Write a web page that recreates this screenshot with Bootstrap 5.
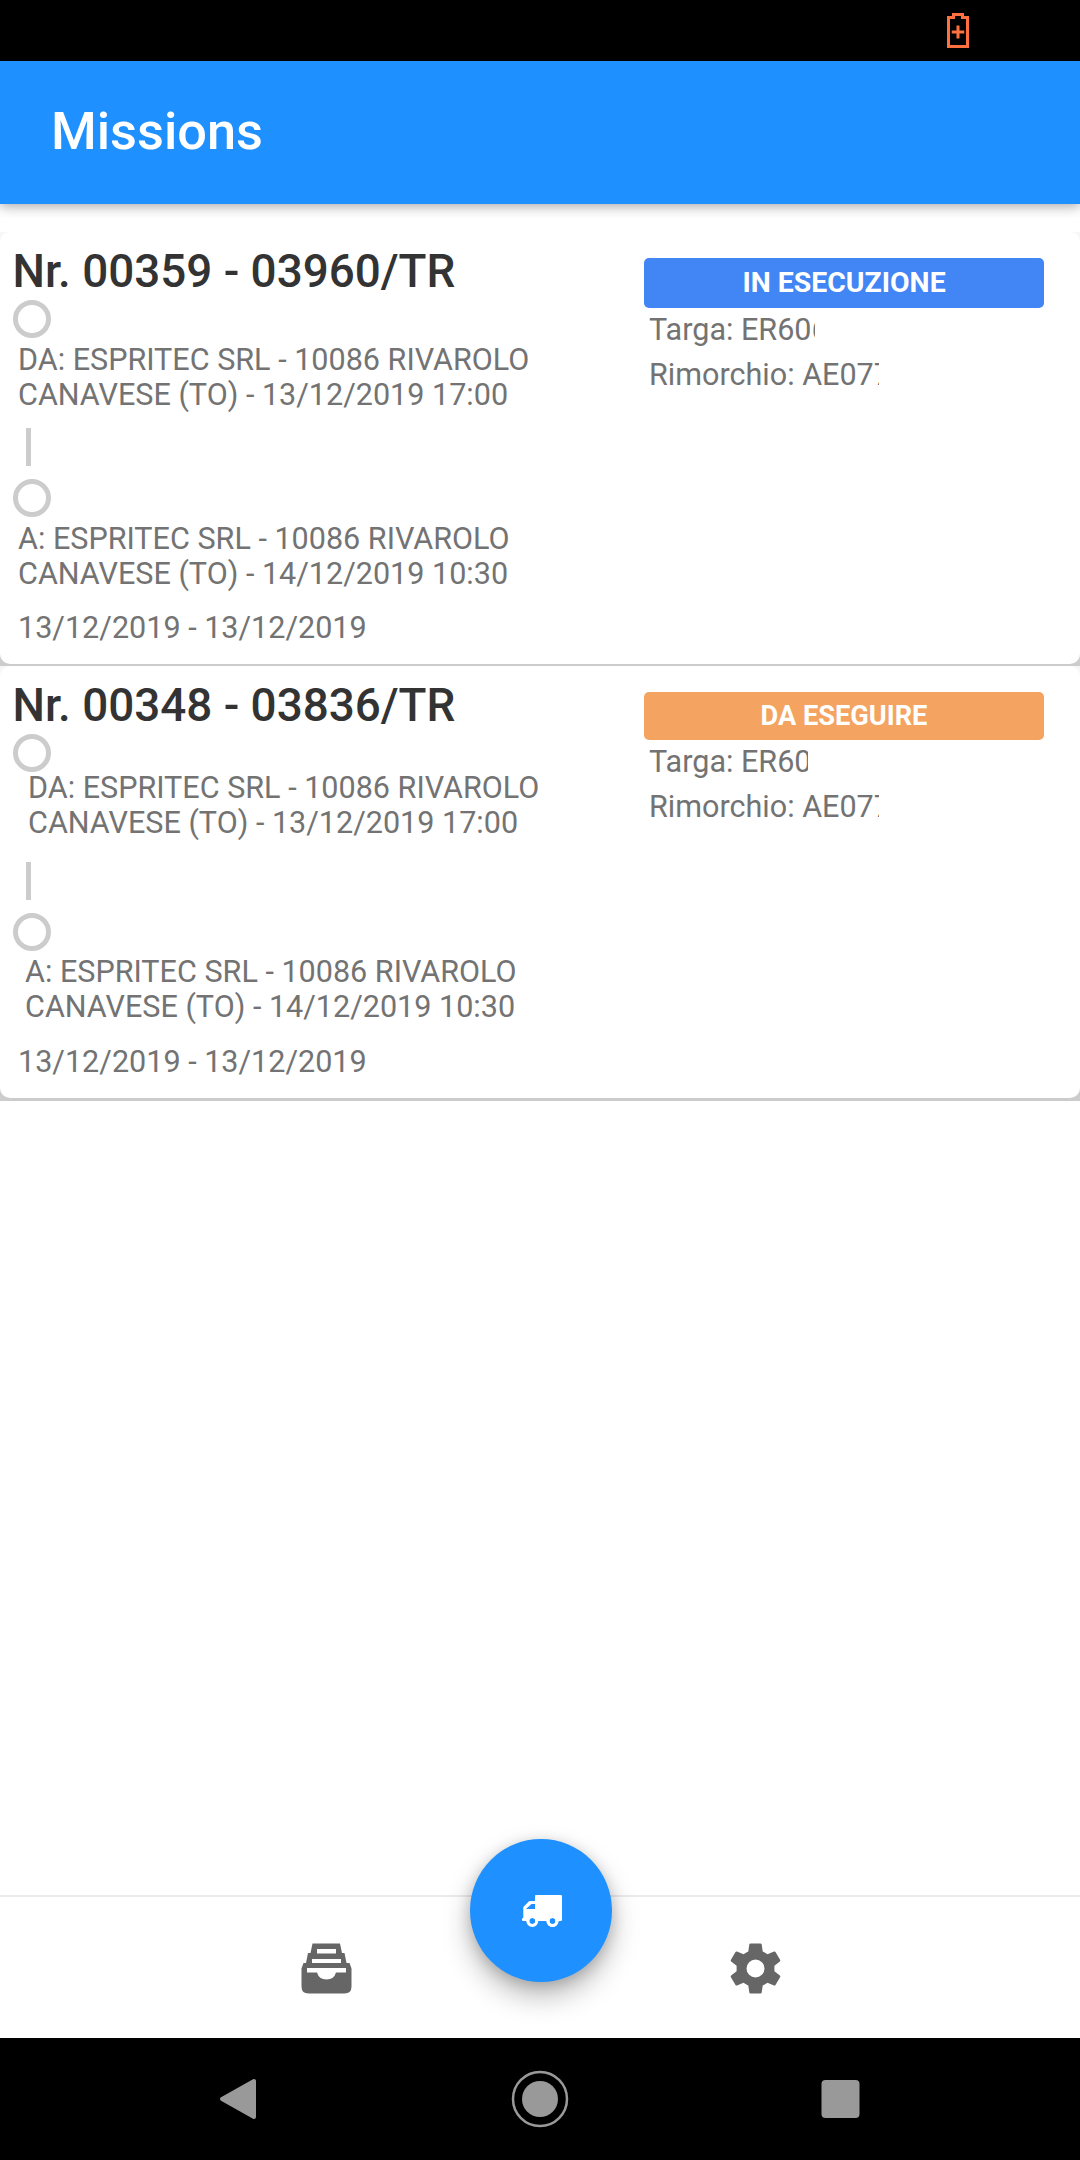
<!DOCTYPE html>
<html lang="it">
<head>
<meta charset="utf-8">
<meta name="viewport" content="width=device-width, initial-scale=1">
<title>Missions</title>
<link href="https://cdn.jsdelivr.net/npm/bootstrap@5.3.0/dist/css/bootstrap.min.css" rel="stylesheet">
<style>
body{font-family:Roboto,"Noto Sans",sans-serif;background:#fff;color:#737373;font-size:30.55px;line-height:35px}
.screen{height:2160px;overflow:hidden}
svg{display:block;overflow:visible}
.status{height:61px;background:#000;padding:13px 111px 0 0}
.appbar{height:143px;background:#1e90ff;color:#fff;padding:0 51px 4px;box-shadow:0 2px 12px rgba(0,0,0,.36);clip-path:inset(0 0 -14px 0)}
.appbar h1{font-size:52.3px;font-weight:500;line-height:60px;margin:0}
.missions{padding-top:28px}
.mission-wrap{background:linear-gradient(#f7f7f7 0%,#f7f7f7 40%,#ccc 98%,#ccc);padding-bottom:2px}
.mission-wrap:last-child{padding-bottom:3px}
.mission{height:432px;background:#fff;border:0;border-radius:10px;padding:12px 36px 0 13px}
.mission h2{font-size:45.8px;line-height:54px;font-weight:500;color:#333;margin:0 0 1px -.5px;padding-top:1px}
.stop-ring{width:38px;height:38px;border:5px solid #ccc;border-radius:50%}
.stop-link{width:5px;height:38px;background:#ccc;margin:16px 0 13px 13px}
.stop-text{margin:4px 0 0 5px}
.dates{margin:19px 0 0 5px}
.next .from{margin:-2px 0 0 15px}
.next .stop-link{margin-top:22px}
.next .to{margin:3px 0 0 12px}
.next .dates{margin-top:20px}
.side{width:400px;padding-top:14px}
.state{height:50px;border-radius:5px;background:#4285f4;color:#fff;font-size:28.4px;font-weight:700;line-height:49px}
.next .state{height:48px;background:#f4a460;font-size:27.2px;line-height:48px}
.plate{margin:4px 0 0 5px;overflow:hidden;white-space:nowrap;width:166px}
.next .plate{width:159px}
.trailer,.next .trailer{margin-top:10px;width:230px}
.tabs{height:143px;border-top:2px solid #ebebeb;background:#fff;padding:0 296px 0 298px}
.fab{width:142px;height:143px;left:470px;top:-58px;background:#1e90ff;box-shadow:0 14px 28px rgba(0,0,0,.27),0 3px 14px rgba(0,0,0,.17)}
.sysnav{height:122px;background:#000;padding:0 219px}
</style>
</head>
<body>
<div class="screen d-flex flex-column">
  <div class="status d-flex justify-content-end flex-shrink-0">
    <svg width="22" height="36" fill="none" stroke="#ff7040" stroke-width="3"><path d="M1.5 4.500H6.500V1.500H15.500V4.500H20.500V33.500H1.500ZM11 12.500V25.500M4.700 19H17.300"/></svg>
  </div>
  <header class="appbar d-flex align-items-center flex-shrink-0"><h1>Missions</h1></header>
  <main class="missions flex-grow-1">
    <div class="mission-wrap">
      <article class="mission card flex-row justify-content-between">
        <div>
          <h2>Nr. 00359 - 03960/TR</h2>
          <div class="stop-ring"></div>
          <div class="stop-text from">DA: ESPRITEC SRL - 10086 RIVAROLO<br>CANAVESE (TO) - 13/12/2019 17:00</div>
          <div class="stop-link"></div>
          <div class="stop-ring"></div>
          <div class="stop-text to">A: ESPRITEC SRL - 10086 RIVAROLO<br>CANAVESE (TO) - 14/12/2019 10:30</div>
          <div class="dates">13/12/2019 - 13/12/2019</div>
        </div>
        <div class="side">
          <div class="state text-center">IN ESECUZIONE</div>
          <div class="plate">Targa: ER606</div>
          <div class="plate trailer">Rimorchio: AE077</div>
        </div>
      </article>
    </div>
    <div class="mission-wrap">
      <article class="mission next card flex-row justify-content-between">
        <div>
          <h2>Nr. 00348 - 03836/TR</h2>
          <div class="stop-ring"></div>
          <div class="stop-text from">DA: ESPRITEC SRL - 10086 RIVAROLO<br>CANAVESE (TO) - 13/12/2019 17:00</div>
          <div class="stop-link"></div>
          <div class="stop-ring"></div>
          <div class="stop-text to">A: ESPRITEC SRL - 10086 RIVAROLO<br>CANAVESE (TO) - 14/12/2019 10:30</div>
          <div class="dates">13/12/2019 - 13/12/2019</div>
        </div>
        <div class="side">
          <div class="state text-center">DA ESEGUIRE</div>
          <div class="plate">Targa: ER60</div>
          <div class="plate trailer">Rimorchio: AE077</div>
        </div>
      </article>
    </div>
  </main>
  <nav class="tabs position-relative d-flex justify-content-between align-items-center flex-shrink-0">
    <svg width="57" height="58" viewBox="0 -0.500 57 58"><path fill="#666" fill-rule="evenodd" d="M14.500 4H42L44 13.500H46.500L48.500 23.500H51.500L53.500 29V47Q53.500 54 46.500 54H10.500Q3.500 54 3.500 47V29L5.500 23.500H8L10 13.500H12.500ZM19 9.500H38V14H19ZM14 19.500H43V23.500H14ZM9 28.500H48V33H38Q36 40 28.500 40Q21 40 19 33H9Z"/></svg>
    <svg width="57" height="58" viewBox="0 -0.500 57 58"><g transform="translate(28.500 29)"><path fill="#666" fill-rule="evenodd" d="M-5-25H5Q6-25 6.200-24L7.200-17Q9.500-16 12-14.200L18.500-17Q19.400-17.300 20-16.500L24.700-8.400Q25-7.600 24.400-7L18.900-2.700V2.700L24.400 7Q25 7.600 24.700 8.400L20 16.500Q19.400 17.300 18.500 17L12 14.200Q9.500 16 7.200 17L6.200 24Q6 25 5 25H-5Q-6 25-6.200 24L-7.200 17Q-9.500 16-12 14.200L-18.500 17Q-19.400 17.300-20 16.500L-24.700 8.400Q-25 7.600-24.400 7L-18.900 2.700V-2.700L-24.400-7Q-25-7.600-24.700-8.400L-20-16.500Q-19.400-17.300-18.500-17L-12-14.200Q-9.500-16-7.200-17L-6.200-24Q-6-25-5-25ZM0-9A9 9 0 1 0 0 9A9 9 0 1 0 0-9Z"/></g></svg>
    <div class="fab position-absolute rounded-circle">
      <svg width="142" height="142"><path fill="#fff" fill-rule="evenodd" d="M60 62H65V57Q65 56 66 56H91Q92 56 92 57V81Q92 82 91 82H88.500A6 6 0 0 1 76.500 82H68A6 6 0 0 1 56.500 82H53Q52 82 52 81V79.500L53.300 79V69Q53.300 68 54 67.300L58.500 62.700Q59.200 62 60 62ZM61.500 65L56 70H65V65ZM62.300 79A3 3 0 1 0 62.300 85A3 3 0 1 0 62.300 79ZM82.500 79A3 3 0 1 0 82.500 85A3 3 0 1 0 82.500 79Z"/><g fill="none" stroke="#fff" stroke-width="3"><circle cx="62.300" cy="82" r="4.500"/><circle cx="82.500" cy="82" r="4.500"/></g></svg>
    </div>
  </nav>
  <div class="sysnav d-flex justify-content-between align-items-center flex-shrink-0">
    <svg width="38" height="44"><path fill="#999" stroke="#999" stroke-width="4" stroke-linejoin="round" d="M35 4V40L3 22Z"/></svg>
    <svg width="56" height="58"><circle cx="29" cy="29" r="27" fill="none" stroke="#999" stroke-width="2.500"/><circle cx="29" cy="29" r="18" fill="#999"/></svg>
    <svg width="40" height="40"><rect x="0.500" y="1" width="38" height="38" rx="4" fill="#999"/></svg>
  </div>
</div>
<script src="https://cdn.jsdelivr.net/npm/bootstrap@5.3.0/dist/js/bootstrap.bundle.min.js"></script>
</body>
</html>
